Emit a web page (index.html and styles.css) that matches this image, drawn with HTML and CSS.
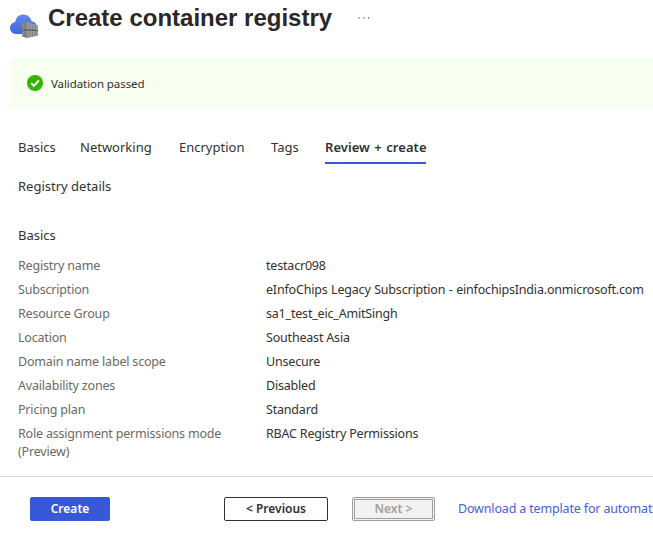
FILE: index.html
```html
<!DOCTYPE html>
<html lang="en">
<head>
<meta charset="utf-8">
<title>Create container registry</title>
<link rel="stylesheet" href="styles.css">
</head>
<body>
<header class="header">
  <svg class="logo" width="28" height="28" viewBox="0 0 28 28">
    <defs><linearGradient id="cloud" x1="0" y1="0" x2="0" y2="1"><stop offset="0" stop-color="#6488e9"/><stop offset="1" stop-color="#3d66df"/></linearGradient></defs>
    <path fill="url(#cloud)" d="M6 23C2.500 23 0 20.400 0 17.100 0 13.800 2.200 11.400 5.200 11 5.800 6.500 9 3.500 13.300 3.500c4.200 0 7.400 2.800 8.300 6.800 3.500.4 5.400 3 5.400 6 0 3.800-3 6.700-6.500 6.700z"/>
    <path fill="#999" d="M12.300 12l5-1L28 14.500v5l-10.700-.6-5 .9z"/>
    <path fill="#999" d="M12.300 20l5-.4 10.700.4v4.700L17.300 27l-5-1.500z"/>
    <path fill="#858585" d="M12.300 12l5-1v8l-5 .9zM12.300 20.500l5-.8V27l-5-1.500z"/>
    <path fill="none" stroke="#777" stroke-width=".6" d="M14.800 12v7M19.500 12.500v6M22.500 13.500v5.300M25.500 14.500v4.500M14.800 21v5M19.500 21v5M22.500 21v4.500M25.500 21v4"/>
    <path fill="none" stroke="#33435f" stroke-width=".8" d="M12.300 19.800l5-1 10.700.9"/>
  </svg>
  <h1>Create container registry</h1>
  <svg class="more" width="12" height="4" viewBox="0 0 12 4"><path fill="#5c5b5a" d="M.5 1.300h1.200v1.200H.5zM5.300 1.300h1.200v1.200H5.300zM10 1.300h1.200v1.200H10z"/></svg>
</header>
<div class="banner">
  <svg width="16" height="16" viewBox="0 0 16 16"><circle cx="8" cy="8" r="8" fill="#36b300"/><path d="M4.300 8.200l2.600 2.600 5-5.500" fill="none" stroke="#fff" stroke-width="1.900"/></svg>
  <span>Validation passed</span>
</div>
<nav class="tabs"><a>Basics</a><a>Networking</a><a>Encryption</a><a>Tags</a><a class="active">Review + create</a></nav>
<h2 class="details">Registry details</h2>
<h2 class="basics">Basics</h2>
<dl class="summary">
  <dt>Registry name</dt><dd>testacr098</dd>
  <dt>Subscription</dt><dd class="subscription">eInfoChips Legacy Subscription - einfochipsIndia.onmicrosoft.com</dd>
  <dt>Resource Group</dt><dd>sa1_test_eic_AmitSingh</dd>
  <dt>Location</dt><dd>Southeast Asia</dd>
  <dt>Domain name label scope</dt><dd>Unsecure</dd>
  <dt>Availability zones</dt><dd>Disabled</dd>
  <dt>Pricing plan</dt><dd>Standard</dd>
  <dt>Role assignment permissions mode (Preview)</dt><dd>RBAC Registry Permissions</dd>
</dl>
<footer class="footer">
  <button class="create">Create</button>
  <button class="previous">&lt; Previous</button>
  <button class="next" disabled>Next &gt;</button>
  <a class="download">Download a template for automat</a>
</footer>
</body>
</html>
```
FILE: styles.css
```css
* { box-sizing: border-box; }
body { margin: 0; height: 546px; overflow: hidden; background: #fff; color: #323130; font: 13px/18px "Noto Sans", sans-serif; }
.header { display: flex; height: 58px; padding: 0 10px; }
.logo { margin-top: 11px; flex: none; }
h1 { margin: 2px 0 0 10px; color: #292827; font: bold 24px/32px "Liberation Sans", sans-serif; white-space: nowrap; }
.more { margin: 16px 0 0 26px; }
.banner { display: flex; align-items: center; gap: 8px; height: 50px; margin-left: 10px; padding-left: 17px; background: #f6fff0; font-size: 11.500px; letter-spacing: -.08px; }
.banner span { padding-top: 2px; }
.tabs { display: grid; grid-template-columns: 62px 99px 92px 54px max-content; height: 56px; padding: 30px 18px 0; }
.tabs a { height: 26px; white-space: nowrap; }
.tabs .active { width: 101px; letter-spacing: .05px; word-spacing: 1px; font-weight: 600; border-bottom: 2px solid #3759d7; }
h2 { margin: 0 18px; font-size: 13px; font-weight: 400; }
.details { padding-top: 13px; height: 62px; }
.basics { height: 31px; }
.summary { display: grid; grid-template-columns: 208px 1fr; column-gap: 40px; row-gap: 6px; margin: 0 0 0 18px; font-size: 12.500px; letter-spacing: -.19px; }
.subscription { word-spacing: .5px; }
dt { color: #6b6967; }
dd { margin: 0; white-space: nowrap; }
.footer { display: flex; align-items: flex-start; height: 70px; margin-top: 15px; padding: 20px 0 0 30px; border-top: 1px solid #dcdcdc; }
button { height: 24px; padding: 0; flex: none; border: 1px solid #323130; border-radius: 2px; background: #fff; color: #323130; font: 600 12px/18px "Noto Sans", sans-serif; }
.create { width: 80px; border-color: #3759d7; background: #3759d7; color: #fff; }
.previous { width: 104px; margin-left: 114px; }
.next { width: 83px; margin-left: 24px; border: 3px double #a19f9d; background: #f3f2f1; color: #a19f9d; }
.download { margin: 3px 0 0 23px; color: #4560dc; font-size: 12.500px; letter-spacing: -.16px; white-space: nowrap; }
```
